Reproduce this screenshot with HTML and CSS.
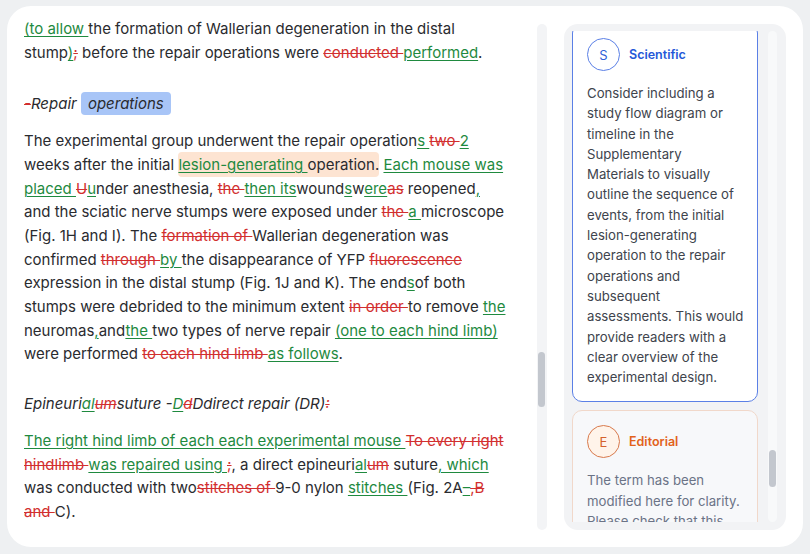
FILE: index.html
```html
<!DOCTYPE html>
<html lang="en">
<head>
    <meta charset="UTF-8">
    <title>Manuscript review</title>
    <link rel="stylesheet" href="styles.css">
</head>
<body>
<div class="editor">
    <div class="doc">
        <div class="doc-text">
            <p><span class="ins">(to allow </span>the formation of Wallerian degeneration in the distal stump<span class="ins">)</span><span class="del">;</span> before the repair operations were <span class="del">conducted </span><span class="ins">performed</span>.</p>

            <h3 class="heading"><span class="del">-</span>Repair <span class="hl-blue">operations</span></h3>

            <p>The experimental group underwent the repair operation<span class="ins">s </span><span class="del">two </span><span class="ins">2</span> weeks after the initial <span class="hl-peach"><span class="ins">lesion-generating </span>operation.</span> <span class="ins">Each mouse was placed </span><span class="del">U</span><span class="ins">u</span>nder anesthesia, <span class="del">the </span><span class="ins">then its</span>wound<span class="ins">s</span>w<span class="ins">ere</span><span class="del">as</span> reopened<span class="ins">,</span> and the sciatic nerve stumps were exposed under <span class="del">the </span><span class="ins">a </span>microscope (Fig. 1H and I). The <span class="del">formation of </span>Wallerian degeneration was confirmed <span class="del">through </span><span class="ins">by </span>the disappearance of YFP <span class="del">fluorescence</span> expression in the distal stump (Fig. 1J and K). The end<span class="ins">s</span>of both stumps were debrided to the minimum extent <span class="del">in order </span>to remove <span class="ins">the</span> neuromas<span class="ins">,</span>and<span class="ins">the </span>two types of nerve repair <span class="ins">(one to each hind limb)</span> were performed <span class="del">to each hind limb </span><span class="ins">as follows</span>.</p>

            <h3 class="heading">Epineuri<span class="ins">al</span><span class="del">um</span>suture -<span class="ins">D</span><span class="del">d</span>Ddirect repair (DR)<span class="del">:</span></h3>

            <p><span class="ins">The right hind limb of each each experimental mouse </span><span class="del">To every right hindlimb </span><span class="ins">was repaired using </span><span class="del">;</span>, a direct epineuri<span class="ins">al</span><span class="del">um</span> suture<span class="ins">, which</span> was conducted with two<span class="del">stitches of </span>9-0 nylon <span class="ins">stitches </span>(Fig. 2A<span class="ins">–</span><span class="del">,B and </span>C).</p>
        </div>
        <div class="scrollbar doc-scrollbar">
            <div class="thumb"></div>
        </div>
    </div>

    <aside class="panel">
        <div class="comments">
            <div class="comment scientific">
                <div class="comment-head">
                    <span class="badge">S</span>
                    <span class="kind">Scientific</span>
                </div>
                <p class="comment-body">Consider including a study flow diagram or timeline in the Supplementary Materials&nbsp;to visually outline the sequence of events, from the initial <span class="nowrap">lesion-generating</span> operation to the repair operations and subsequent assessments. This would provide readers with a clear overview of the experimental design.</p>
            </div>
            <div class="comment editorial">
                <div class="comment-head">
                    <span class="badge">E</span>
                    <span class="kind">Editorial</span>
                </div>
                <p class="comment-body">The term has been modified here for clarity. Please check that this intended meaning is preserved.</p>
            </div>
        </div>
        <div class="scrollbar panel-scrollbar">
            <div class="thumb"></div>
        </div>
    </aside>
</div>
</body>
</html>
```

FILE: styles.css
```css
html,
body {
    margin: 0;
    padding: 0;
}

body {
    font-family: Inter, "Noto Sans", sans-serif;
    background-color: #eef0f2;
    color: #2a2b2f;
}

.editor {
    display: flex;
    gap: 17px;
    box-sizing: border-box;
    width: 796px;
    height: 541px;
    margin: 6px 7px;
    padding: 18px 17px 17px 17px;
    border-radius: 24px;
    background-color: #ffffff;
}

/* document column */

.doc {
    display: flex;
    flex: 1;
    gap: 25px;
    min-width: 0;
}

.doc-text {
    flex: 1;
    min-width: 0;
    margin-top: -7px;
    padding-right: 4px;
    font-size: 15px;
    line-height: 23.7px;
    overflow: hidden;
}

.doc-text p {
    margin: 0 0 13px;
}

.doc-text .heading {
    margin: 26px 0 13px;
    font-size: 15px;
    font-weight: 400;
    font-style: italic;
}

.doc-text .heading:first-of-type {
    margin-top: 28px;
}

.ins {
    color: #1f8a3f;
    text-decoration: underline;
    text-decoration-thickness: 1px;
    text-underline-offset: 2px;
}

.del {
    color: #d22f2f;
    text-decoration: line-through;
    text-decoration-thickness: 1px;
}

.hl-blue {
    padding: 2px 7px;
    border-radius: 4px;
    background-color: #a8c5f7;
}

.hl-peach {
    padding: 3px 0;
    border-radius: 4px;
    background-color: #fde4d2;
}

.nowrap {
    white-space: nowrap;
}

.scrollbar {
    flex: none;
    border-radius: 5px;
}

.doc-scrollbar {
    width: 10px;
    padding-top: 328px;
    box-sizing: border-box;
    background-color: #f3f4f6;
}

.doc-scrollbar .thumb {
    width: 7px;
    height: 55px;
    margin-left: 1px;
    border-radius: 4px;
    background-color: #c3c7ce;
}

/* comments panel */

.panel {
    display: flex;
    gap: 10px;
    box-sizing: border-box;
    width: 222px;
    padding: 7px 9px 8px 8px;
    border-radius: 14px;
    background-color: #f2f3f5;
}

.comments {
    flex: 1;
    min-width: 0;
    overflow: hidden;
}

.comment {
    box-sizing: border-box;
    margin-bottom: 8px;
    padding: 14px 10px 14px 14px;
    border-radius: 10px;
}

.comment:first-child {
    margin-top: -8px;
}

.comment-head {
    display: flex;
    align-items: center;
    gap: 9px;
}

.badge {
    display: flex;
    align-items: center;
    justify-content: center;
    box-sizing: border-box;
    width: 33px;
    height: 33px;
    border-radius: 50%;
    font-size: 13px;
}

.kind {
    font-size: 12.5px;
    font-weight: 600;
}

.comment-body {
    margin: 12px 0 0;
    font-size: 13.2px;
    line-height: 20.3px;
}

.scientific {
    border: 1.5px solid #5b80e6;
    background-color: #ffffff;
}

.scientific .badge {
    border: 1.5px solid #5b80e6;
    color: #2f5fd8;
    background-color: #ffffff;
}

.scientific .kind {
    color: #2458d8;
}

.scientific .comment-body {
    color: #40444d;
}

.editorial {
    border: 1px solid #f1d8ca;
    background-color: #f7f8fa;
}

.editorial .badge {
    border: 1.5px solid #d87a4d;
    color: #d4622c;
    background-color: #fff4ea;
}

.editorial .kind {
    color: #e2621b;
}

.editorial .comment-body {
    color: #6b7386;
}

.panel-scrollbar {
    width: 9px;
    padding-top: 419px;
    box-sizing: border-box;
    background-color: #f8f9fa;
}

.panel-scrollbar .thumb {
    width: 7px;
    height: 37px;
    margin-left: 1px;
    border-radius: 4px;
    background-color: #c3c7ce;
}
```
